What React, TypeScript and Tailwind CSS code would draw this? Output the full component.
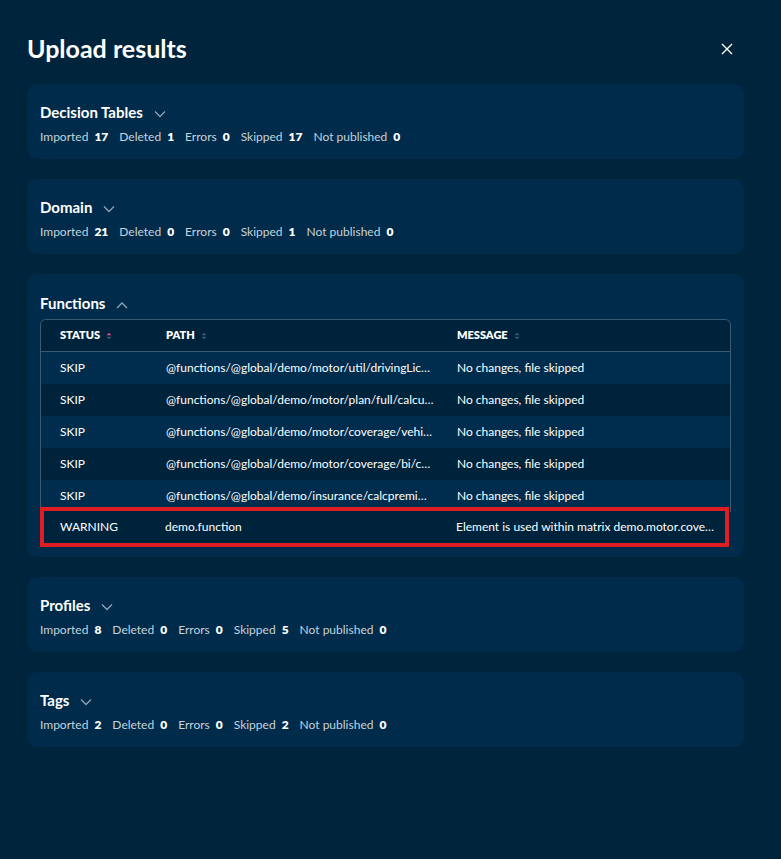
import React from "react";

const font = { fontFamily: "Lato, 'Noto Sans', sans-serif" };

type Stat = [string, string];

function Chevron({ up = false }: { up?: boolean }) {
  return (
    <svg width="12" height="8" viewBox="0 0 12 8" className="ml-[11px] mt-[3px]" fill="none">
      {up ? (
        <path d="M1 7 L6 2 L11 7" stroke="#8ea3b6" strokeWidth="1.3" />
      ) : (
        <path d="M1 1.5 L6 6.5 L11 1.5" stroke="#8ea3b6" strokeWidth="1.3" />
      )}
    </svg>
  );
}

function SortIcon({ active = false }: { active?: boolean }) {
  return (
    <svg width="6" height="8" viewBox="0 0 6 8" className="ml-[6px]">
      <path d="M0.5 3.3 L3 0.8 L5.5 3.3 Z" fill={active ? "#e0468f" : "#3d5a73"} />
      <path d="M0.5 4.7 L3 7.2 L5.5 4.7 Z" fill="#3d5a73" />
    </svg>
  );
}

function Card({ title, stats }: { title: string; stats: Stat[] }) {
  return (
    <div className="rounded-[10px] bg-[#002b4a] px-[13px] pt-[19px] pb-[14px]">
      <div className="flex h-[18px] items-center">
        <span className="text-[15px] font-bold leading-[18px] text-white">{title}</span>
        <Chevron />
      </div>
      <div className="mt-[8px] flex h-[16px] items-center gap-[11px] text-[12px] leading-[16px]">
        {stats.map(([k, v]) => (
          <span key={k} className="flex items-center gap-[6px]">
            <span className="text-[#c7d2dc]">{k}</span>
            <span className="font-extrabold text-white">{v}</span>
          </span>
        ))}
      </div>
    </div>
  );
}

const rows = [
  ["SKIP", "@functions/@global/demo/motor/util/drivingLic…", "No changes, file skipped"],
  ["SKIP", "@functions/@global/demo/motor/plan/full/calcu…", "No changes, file skipped"],
  ["SKIP", "@functions/@global/demo/motor/coverage/vehi…", "No changes, file skipped"],
  ["SKIP", "@functions/@global/demo/motor/coverage/bi/c…", "No changes, file skipped"],
  ["SKIP", "@functions/@global/demo/insurance/calcpremi…", "No changes, file skipped"],
];

function mkStats(a: string, b: string, c: string, d: string, e: string): Stat[] {
  return [
    ["Imported", a],
    ["Deleted", b],
    ["Errors", c],
    ["Skipped", d],
    ["Not published", e],
  ];
}

export default function App() {
  return (
    <div className="min-h-[859px] w-full bg-[#00243c] pl-[27px] pr-[37px] pt-[33px] pb-[40px]" style={font}>
      <div className="flex h-[30px] items-center justify-between">
        <h1 className="text-[25px] font-bold leading-[30px] text-white">Upload results</h1>
        <svg width="12" height="12" viewBox="0 0 12 12" className="mr-[11px] mt-[2px]">
          <path d="M1 1 L11 11 M11 1 L1 11" stroke="#ffffff" strokeWidth="1.4" />
        </svg>
      </div>
      <div className="mt-[21px] flex flex-col gap-[20px]">
        <Card title="Decision Tables" stats={mkStats("17", "1", "0", "17", "0")} />
        <Card title="Domain" stats={mkStats("21", "0", "0", "1", "0")} />
        <div className="rounded-[10px] bg-[#002b4a] px-[13px] pt-[20px] pb-[10px]">
          <div className="flex h-[18px] items-center">
            <span className="text-[15px] font-bold leading-[18px] text-white">Functions</span>
            <Chevron up />
          </div>
          <div className="mt-[7px] overflow-hidden rounded-t-[6px] border-t border-l border-r border-[#3d5a73] text-[12px]">
            <div className="grid h-[32px] grid-cols-[125px_291px_1fr] items-center border-b border-[#3d5a73] bg-[#00233c] text-[11px] font-extrabold text-white">
              <div className="flex items-center pl-[19px]">STATUS<SortIcon active /></div>
              <div className="flex items-center">PATH<SortIcon /></div>
              <div className="flex items-center">MESSAGE<SortIcon /></div>
            </div>
            {rows.map((r, i) => (
              <div
                key={i}
                className={`grid h-[32px] grid-cols-[125px_291px_1fr] items-center text-white ${i % 2 === 0 ? "bg-[#002d4d]" : "bg-[#00233c]"}`}
              >
                <div className="pl-[19px]">{r[0]}</div>
                <div className="truncate pr-[8px]">{r[1]}</div>
                <div className="truncate">{r[2]}</div>
              </div>
            ))}
          </div>
          <div className="-mt-[5px] mr-[2px] border-[4px] border-[#e11d24] bg-[#00233c]">
            <div className="grid h-[32px] grid-cols-[121px_291px_1fr] items-center text-[12px] text-white">
              <div className="pl-[16px]">WARNING</div>
              <div>demo.function</div>
              <div className="truncate pr-[8px]">Element is used within matrix demo.motor.cover…</div>
            </div>
          </div>
        </div>
        <Card title="Profiles" stats={mkStats("8", "0", "0", "5", "0")} />
        <Card title="Tags" stats={mkStats("2", "0", "0", "2", "0")} />
      </div>
    </div>
  );
}
